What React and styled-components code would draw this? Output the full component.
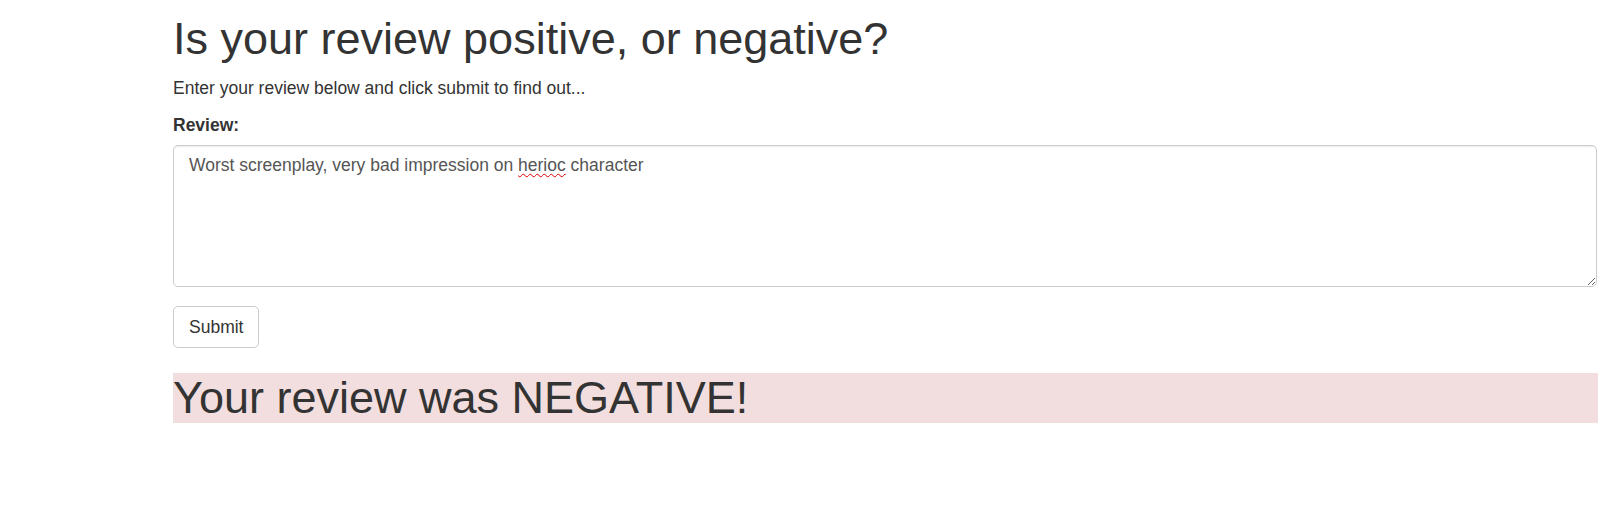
import React from 'react'
import styled, { createGlobalStyle } from 'styled-components'

const GlobalStyle = createGlobalStyle`
  html, body {
    margin: 0;
    padding: 0;
    background: #fff;
  }
  body {
    font-family: "Liberation Sans", Arial, sans-serif;
    font-size: 17.5px;
    line-height: 1.42857;
    color: #333;
  }
  * {
    box-sizing: border-box;
  }
`;

const Container = styled.div`
  padding: 0 0 0 173px;
`;

const Title = styled.h1`
  font-size: 45px;
  font-weight: 500;
  line-height: 1.1;
  margin: ${props => props.first ? "14px 0 12.5px" : "25px 0 12.5px"};
  background-color: ${props => props.type === "danger" ? "#f2dede" : "transparent"};
`;

const Lead = styled.p`
  margin: 0 0 12.5px;
`;

const FormGroup = styled.div`
  margin-bottom: 19.5px;
`;

const Label = styled.label`
  display: inline-block;
  margin-bottom: 6.25px;
  font-weight: 700;
`;

const ReviewBox = styled.div`
  display: block;
  width: calc(100% - 1px);
  height: 142px;
  padding: 7.5px 15px;
  font-size: 17.5px;
  line-height: 25px;
  color: #555;
  background-color: #fff;
  border: 1px solid #ccc;
  border-radius: 5px;
  box-shadow: inset 0 1px 1px rgba(0, 0, 0, 0.075);
  overflow: auto;
  resize: both;
  outline: none;
  white-space: pre-wrap;
`;

// stands in for the browser's spell-check squiggle
const Misspelled = styled.span`
  text-decoration: underline wavy #e00000;
  text-decoration-thickness: 1px;
  text-underline-offset: 1.5px;
  text-decoration-skip-ink: none;
`;

const Button = styled.button`
  display: inline-block;
  padding: 7.5px 15px;
  font-family: inherit;
  font-size: 17.5px;
  line-height: 25px;
  color: #333;
  background-color: #fff;
  border: 1px solid #ccc;
  border-radius: 5px;
  cursor: pointer;
`;

const App = () => {
  return (
    <Container>
      <GlobalStyle/>
      <Title first>Is your review positive, or negative?</Title>
      <Lead>Enter your review below and click submit to find out...</Lead>
      <form onSubmit={e => e.preventDefault()}>
        <FormGroup>
          <Label htmlFor="review">Review:</Label>
          <ReviewBox
            id="review"
            role="textbox"
            contentEditable
            suppressContentEditableWarning
            spellCheck={false}
          >
            Worst screenplay, very bad impression on <Misspelled>herioc</Misspelled> character
          </ReviewBox>
        </FormGroup>
        <Button type="submit">Submit</Button>
      </form>
      <Title type="danger">Your review was NEGATIVE!</Title>
    </Container>
  )
}

export default App
